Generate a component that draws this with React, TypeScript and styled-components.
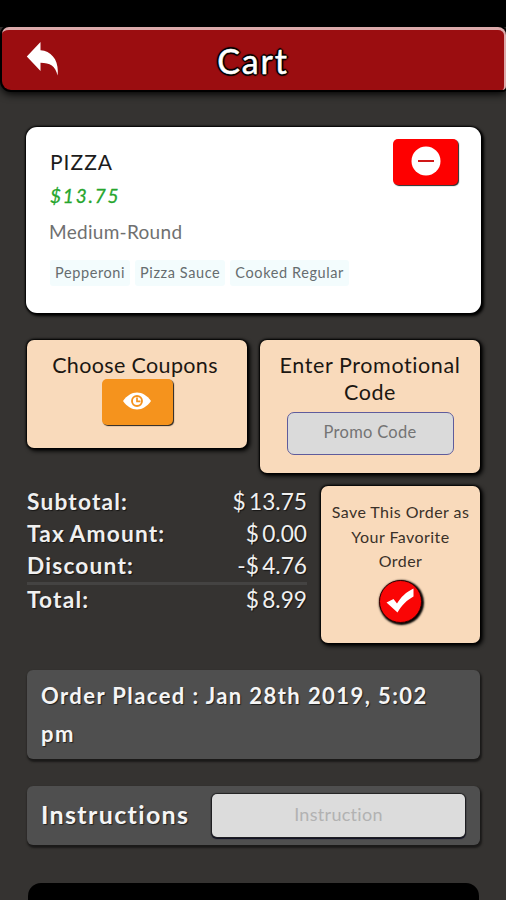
import React from "react";
import styled, { createGlobalStyle } from "styled-components";

const GlobalStyle = createGlobalStyle`
  * { box-sizing: border-box; }
  body {
    margin: 0;
    background: #353331;
    font-family: Lato, "Liberation Sans", sans-serif;
    letter-spacing: 1px;
    overflow: hidden;
  }
  button, input { font: inherit; letter-spacing: inherit; }
`;

const Screen = styled.div`
  width: 506px;
  height: 900px;
  overflow: hidden;
  display: flex;
  flex-direction: column;
`;

const StatusBar = styled.div`
  flex: none;
  height: 27px;
  background: #000;
`;

const Header = styled.header`
  flex: none;
  height: 63px;
  margin: 0 0 0 2px;
  padding: 0 24px;
  display: grid;
  grid-template-columns: 33px 1fr 33px;
  align-items: center;
  background: #9b0d10;
  border-top: 3px solid #dca9aa;
  border-right: 2px solid #dca9aa;
  border-radius: 7px 8px 4px 9px;
  box-shadow: 0 0 0 2px #000, 0 3px 8px 1px #000;
`;

const BackButton = styled.button`
  display: flex;
  padding: 0;
  border: 0;
  background: none;
  svg { margin-top: -3px; }
`;

const Title = styled.h1`
  margin: 1px 0 0;
  text-align: center;
  font-size: 34px;
  line-height: 40px;
  font-weight: 400;
  letter-spacing: 1.8px;
  color: #fff;
  -webkit-text-stroke: 0.5px #fff;
  text-shadow: 2px 0 1px #000, -2px 0 1px #000, 0 2px 1px #000, 0 -2px 1px #000,
    1px 1px 1px #000, -1px -1px 1px #000, 1px -1px 1px #000, -1px 1px 1px #000;
`;

const Content = styled.main`
  display: flex;
  flex-direction: column;
  padding: 37px 26px 0 27px;
`;

const ItemCard = styled.article`
  height: 186px;
  margin: 0 -1px;
  padding: 12px 23px 0 24px;
  display: flex;
  justify-content: space-between;
  align-items: flex-start;
  background: #fff;
  border-radius: 11px;
  box-shadow: 0 0 2px 1px #000, 2px 2px 3px 1px #000;
`;

const ItemInfo = styled.div`
  display: flex;
  flex-direction: column;
  padding-top: 8px;
`;

const ItemName = styled.h2`
  margin: 0;
  font-size: 21px;
  line-height: 30px;
  font-weight: 400;
  color: #1c1c1c;
`;

const ItemPrice = styled.div`
  font-size: 19px;
  line-height: 26px;
  margin-top: 6px;
  font-style: italic;
  font-weight: 400;
  letter-spacing: 1.8px;
  color: #26a62d;
  -webkit-text-stroke: 0.3px #26a62d;
`;

const ItemSize = styled.div`
  margin-top: 10px;
  margin-left: -1px;
  font-size: 19px;
  line-height: 26px;
  letter-spacing: 0.3px;
  color: #707070;
`;

const Toppings = styled.div`
  display: flex;
  gap: 5px;
  margin-top: 15px;
`;

const Topping = styled.span`
  padding: 0 5px;
  height: 26px;
  font-size: 14.5px;
  line-height: 26px;
  letter-spacing: 0.6px;
  white-space: nowrap;
  color: #666d6f;
  background: #f3fcfd;
  border-radius: 3px;
`;

const IconButton = styled.button<{ $color: string; $width: number }>`
  display: flex;
  align-items: center;
  justify-content: center;
  width: ${(p) => p.$width}px;
  height: 46px;
  padding: 0 0 2px;
  border: 0;
  border-radius: 5px;
  background: ${(p) => p.$color};
  box-shadow: 1px 1px 1px 0 rgba(0, 0, 0, 0.85);
`;

const CouponRow = styled.section`
  display: flex;
  align-items: flex-start;
  gap: 13px;
  margin-top: 27px;
`;

const PeachCard = styled.div<{ $width: number; $height: number; $top: number }>`
  flex: none;
  display: flex;
  flex-direction: column;
  align-items: center;
  width: ${(p) => p.$width}px;
  height: ${(p) => p.$height}px;
  padding-top: ${(p) => p.$top}px;
  background: #f9dabb;
  border-radius: 7px;
  box-shadow: 0 0 2px 1px #000, 2px 2px 4px 1px #000;
`;

const CardTitle = styled.h3<{ $tracking: number; $nudge?: number }>`
  margin: 0 ${(p) => p.$nudge ?? 0}px 0 0;
  font-size: 21.5px;
  line-height: 27px;
  font-weight: 400;
  letter-spacing: ${(p) => p.$tracking}px;
  text-align: center;
  white-space: nowrap;
  color: #1c1712;
`;

const PromoInput = styled.input`
  width: 167px;
  height: 43px;
  margin-top: 6px;
  padding: 0 0 3px;
  border: 1.5px solid #5f5c9c;
  border-radius: 7px;
  background: #dadada;
  text-align: center;
  font-size: 16.5px;
  letter-spacing: 0.3px;
  &::placeholder { color: #747474; opacity: 1; }
`;

const SummaryRow = styled.section`
  display: flex;
  justify-content: space-between;
  align-items: flex-start;
  margin-top: 13px;
`;

const Totals = styled.dl`
  width: 280px;
  margin: 0;
`;

const TotalLine = styled.div<{ $divided?: boolean }>`
  display: flex;
  justify-content: space-between;
  height: ${(p) => (p.$divided ? 35 : 32)}px;
  border-top: ${(p) => (p.$divided ? "3px solid #444342" : "0")};
  line-height: ${(p) => (p.$divided ? 30 : 31)}px;
  font-size: 22.7px;
  color: #f0f0f0;
  text-shadow: 1px 1px 1px rgba(0, 0, 0, 0.6);
`;

const Label = styled.dt`
  font-weight: 700;
  letter-spacing: 1.2px;
  word-spacing: -1.5px;
`;

const Amount = styled.dd`
  margin: 0;
  letter-spacing: 0;
  word-spacing: -2.5px;
`;

const FavoriteText = styled.p`
  margin: 0;
  font-size: 16px;
  line-height: 24.5px;
  letter-spacing: 0.45px;
  text-align: center;
  white-space: nowrap;
  color: #3a3129;
`;

const CheckButton = styled.button`
  display: flex;
  align-items: center;
  justify-content: center;
  width: 43px;
  height: 43px;
  margin-top: 6px;
  padding: 0;
  border: 1px solid #300;
  border-radius: 50%;
  background: #fa0505;
  box-shadow: 1px 1px 2px 1px #000;
`;

const Panel = styled.section<{ $height: number; $gap: number }>`
  display: flex;
  align-items: center;
  justify-content: space-between;
  height: ${(p) => p.$height}px;
  margin-top: ${(p) => p.$gap}px;
  padding: 0 15px 0 14px;
  border-radius: 6px;
  background: #4f4f4f;
  box-shadow: 1px 2px 2px 1px #1b1a19;
  color: #f5f5f5;
  text-shadow: 1px 1px 1px rgba(0, 0, 0, 0.6);
  font-weight: 700;
`;

const PlacedText = styled.p`
  margin: 0;
  font-size: 22px;
  line-height: 38px;
  white-space: nowrap;
  letter-spacing: 1.42px;
`;

const InstructionLabel = styled.label`
  padding-bottom: 3px;
  font-size: 25px;
  line-height: 32px;
  letter-spacing: 1.35px;
`;

const InstructionInput = styled.input`
  width: 253px;
  height: 43px;
  padding: 0 0 3px;
  border: 0;
  border-radius: 5px;
  background: #dcdcdc;
  text-align: center;
  font-size: 18px;
  font-weight: 400;
  letter-spacing: 0.3px;
  text-shadow: none;
  box-shadow: 0 0 1px 1px #222, 0 1px 1px 1px #0c0c24;
  &::placeholder { color: #b2b2b2; opacity: 1; }
`;

const BottomBar = styled.div`
  height: 60px;
  margin: 38px 1px 0 1px;
  border-radius: 13px;
  background: #000;
`;

const BackIcon = () => (
  <svg width="33" height="35" viewBox="0 0 33 35" fill="#fff">
    <path d="M14.500 1V9.200C26 10 33.500 20 31.500 34.500C29.500 25 24 21.800 14.500 21.800V30L0.800 15.500Z" />
  </svg>
);

const MinusIcon = () => (
  <svg width="30" height="30" viewBox="0 0 30 30">
    <circle cx="15" cy="15" r="14.5" fill="#fff" />
    <path d="M7 15H23" stroke="#d01818" strokeWidth="2" />
  </svg>
);

const EyeIcon = () => (
  <svg width="28" height="18" viewBox="0 0 28 18">
    <path d="M0 9C4 3.500 8.500 0.500 14 0.500S24 3.500 28 9C24 14.500 19.500 17.500 14 17.500S4 14.500 0 9Z" fill="#fff" />
    <circle cx="14" cy="9" r="5" fill="#fff" stroke="#f5931d" strokeWidth="1.9" />
    <path d="M14 5.500V9.300H17.500" fill="none" stroke="#f5931d" strokeWidth="1.700" />
  </svg>
);

const CheckIcon = () => (
  <svg width="31" height="28" viewBox="0 0 31 28" fill="#fff">
    <path d="M1.500 15.500L8.500 12L12 16.500C16 10 21 5 28.500 1.500V9.500C22 13 17 18 12.500 25.500Z" />
  </svg>
);

const toppings = ["Pepperoni", "Pizza Sauce", "Cooked Regular"];

const totals = [
  { label: "Subtotal:", amount: "$ 13.75" },
  { label: "Tax Amount:", amount: "$ 0.00" },
  { label: "Discount:", amount: "-$ 4.76" },
  { label: "Total:", amount: "$ 8.99", divided: true },
];

export default function App() {
  return (
    <>
      <GlobalStyle />
      <Screen>
        <StatusBar />
        <Header>
          <BackButton aria-label="Back">
            <BackIcon />
          </BackButton>
          <Title>Cart</Title>
        </Header>
        <Content>
          <ItemCard>
            <ItemInfo>
              <ItemName>PIZZA</ItemName>
              <ItemPrice>$13.75</ItemPrice>
              <ItemSize>Medium-Round</ItemSize>
              <Toppings>
                {toppings.map((name) => (
                  <Topping key={name}>{name}</Topping>
                ))}
              </Toppings>
            </ItemInfo>
            <IconButton $color="#fe0000" $width={65} aria-label="Remove item">
              <MinusIcon />
            </IconButton>
          </ItemCard>
          <CouponRow>
            <PeachCard $width={220} $height={108} $top={12}>
              <CardTitle $tracking={0.35} $nudge={4}>
                Choose Coupons
              </CardTitle>
              <IconButton $color="#f5931d" $width={71} aria-label="View coupons">
                <EyeIcon />
              </IconButton>
            </PeachCard>
            <PeachCard $width={220} $height={133} $top={12}>
              <CardTitle $tracking={0.6}>
                Enter Promotional
                <br />
                Code
              </CardTitle>
              <PromoInput placeholder="Promo Code" />
            </PeachCard>
          </CouponRow>
          <SummaryRow>
            <Totals>
              {totals.map((line) => (
                <TotalLine key={line.label} $divided={line.divided}>
                  <Label>{line.label}</Label>
                  <Amount>{line.amount}</Amount>
                </TotalLine>
              ))}
            </Totals>
            <PeachCard $width={159} $height={157} $top={14}>
              <FavoriteText>
                Save This Order as
                <br />
                Your Favorite
                <br />
                Order
              </FavoriteText>
              <CheckButton aria-label="Save as favorite">
                <CheckIcon />
              </CheckButton>
            </PeachCard>
          </SummaryRow>
          <Panel $height={89} $gap={27}>
            <PlacedText>
              Order Placed : Jan 28th 2019, 5:02
              <br />
              pm
            </PlacedText>
          </Panel>
          <Panel $height={59} $gap={27}>
            <InstructionLabel htmlFor="instruction">Instructions</InstructionLabel>
            <InstructionInput id="instruction" placeholder="Instruction" />
          </Panel>
          <BottomBar />
        </Content>
      </Screen>
    </>
  );
}
